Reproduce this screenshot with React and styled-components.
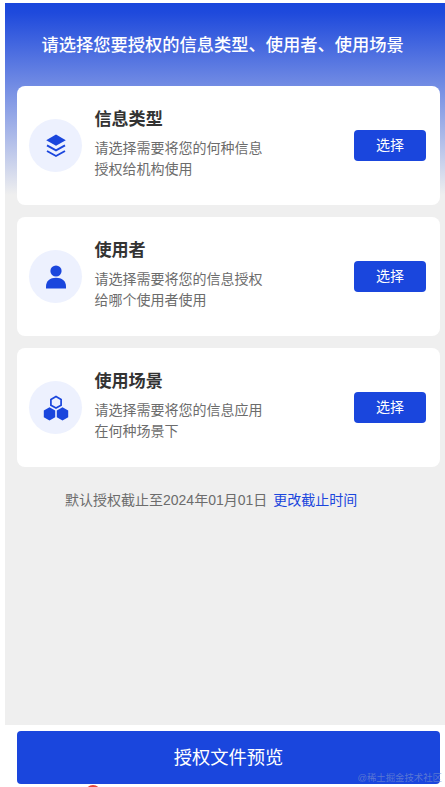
import React from "react";
import styled, { createGlobalStyle } from "styled-components";

const GlobalStyle = createGlobalStyle`
  * {
    box-sizing: border-box;
  }
  body {
    margin: 0;
    background: #ffffff;
    font-family: "Liberation Sans", "Noto Sans CJK SC", sans-serif;
    overflow: hidden;
  }
`;

const Page = styled.div`
  display: flex;
  flex-direction: column;
  width: 445px;
  height: 787px;
  padding: 3px 0 0 5px;
  overflow: hidden;
`;

const Screen = styled.main`
  display: flex;
  flex-direction: column;
  height: 722px;
  padding: 0 5px 0 12px;
  background: linear-gradient(180deg, #1a46dc 0, #1f4adc 10px, #efefef 192px)
    #efefef;
`;

const Header = styled.h1`
  height: 83px;
  margin: 0;
  padding: 0 0 0 24.5px;
  font-size: 17.25px;
  font-weight: 500;
  line-height: 84px;
  white-space: nowrap;
  color: #ffffff;
`;

const CardList = styled.div`
  display: flex;
  flex-direction: column;
  gap: 12px;
`;

const Card = styled.section`
  display: flex;
  align-items: center;
  height: 119px;
  padding: 0 14px 0 12px;
  background: #ffffff;
  border-radius: 8px;
`;

const IconCircle = styled.div`
  display: flex;
  align-items: center;
  justify-content: center;
  width: 53px;
  height: 53px;
  flex-shrink: 0;
  border-radius: 50%;
  background: #edf1fe;
  color: #1a46dd;
`;

const CardBody = styled.div`
  flex: 1;
  margin-left: 12.4px;
  padding-bottom: 4px;
`;

const CardTitle = styled.h2`
  margin: 0 0 6px;
  font-size: 17.1px;
  font-weight: 700;
  line-height: 24px;
  color: #333333;
`;

const CardText = styled.p`
  width: 172px;
  margin: 0;
  font-size: 14px;
  line-height: 20.6px;
  color: #6c6c6c;
`;

const SelectButton = styled.button`
  width: 72px;
  height: 31px;
  padding: 0;
  border: 0;
  border-radius: 4px;
  background: #1a46dd;
  font-family: inherit;
  font-size: 14px;
  line-height: 31px;
  color: #ffffff;
`;

const Deadline = styled.div`
  display: flex;
  gap: 6px;
  margin: 22px 0 0 48px;
  font-size: 14px;
  line-height: 22px;
  white-space: nowrap;
  color: #6c6c6c;
`;

const ChangeLink = styled.span`
  color: #1a46dd;
`;

const Footer = styled.footer`
  position: relative;
  height: 62px;
  padding: 6px 5px 0 12px;
`;

const PreviewButton = styled.button`
  width: 100%;
  height: 53px;
  padding: 0;
  border: 0;
  border-radius: 4px;
  background: #1a46dd;
  font-family: inherit;
  font-size: 18.3px;
  line-height: 53px;
  color: #ffffff;
`;

const Watermark = styled.span`
  position: absolute;
  right: 3px;
  bottom: 2px;
  font-size: 9.4px;
  line-height: 14px;
  white-space: nowrap;
  color: rgba(125, 145, 205, 0.65);
`;

const RedMark = styled.span`
  position: absolute;
  left: 80px;
  top: 60px;
  width: 16px;
  height: 16px;
  border: 2px solid #e2453a;
  border-radius: 50%;
`;

const LayersIcon = () => (
  <svg width="22" height="26" viewBox="0 0 22 26">
    <path d="M11 1.6 L20.8 7.2 L11 12.8 L1.2 7.2 Z" fill="currentColor" />
    <path
      d="M2 12.3 L11 17.3 L20 12.3 M2 18 L11 23 L20 18"
      fill="none"
      stroke="currentColor"
      strokeWidth="1.9"
    />
  </svg>
);

const UserIcon = () => (
  <svg width="22" height="26" viewBox="0 0 22 26">
    <circle cx="11" cy="7" r="5.6" fill="currentColor" />
    <path
      d="M1 24.5 V22.5 C1 17 5.2 13.8 11 13.8 S21 17 21 22.5 V24.5 Z"
      fill="currentColor"
    />
  </svg>
);

const HexagonsIcon = () => (
  <svg width="26" height="26" viewBox="0 0 26 26">
    <path
      d="M13 1.6 L18.1 4.5 V10.2 L13 13.1 L7.9 10.2 V4.5 Z"
      fill="none"
      stroke="currentColor"
      strokeWidth="1.7"
    />
    <path
      d="M6.5 12.3 L12.2 15.6 V22.3 L6.5 25.6 L.8 22.3 V15.6 Z M19.5 12.3 L25.2 15.6 V22.3 L19.5 25.6 L13.8 22.3 V15.6 Z"
      fill="currentColor"
    />
  </svg>
);

const items = [
  {
    title: "信息类型",
    lines: ["请选择需要将您的何种信息", "授权给机构使用"],
    Icon: LayersIcon,
  },
  {
    title: "使用者",
    lines: ["请选择需要将您的信息授权", "给哪个使用者使用"],
    Icon: UserIcon,
  },
  {
    title: "使用场景",
    lines: ["请选择需要将您的信息应用", "在何种场景下"],
    Icon: HexagonsIcon,
  },
];

const App = () => {
  return (
    <>
      <GlobalStyle />
      <Page>
        <Screen>
          <Header>请选择您要授权的信息类型、使用者、使用场景</Header>
          <CardList>
            {items.map(({ title, lines, Icon }) => (
              <Card key={title}>
                <IconCircle>
                  <Icon />
                </IconCircle>
                <CardBody>
                  <CardTitle>{title}</CardTitle>
                  <CardText>
                    {lines[0]}
                    <br />
                    {lines[1]}
                  </CardText>
                </CardBody>
                <SelectButton>选择</SelectButton>
              </Card>
            ))}
          </CardList>
          <Deadline>
            <span>默认授权截止至2024年01月01日</span>
            <ChangeLink>更改截止时间</ChangeLink>
          </Deadline>
        </Screen>
        <Footer>
          <PreviewButton>授权文件预览</PreviewButton>
          <Watermark>@稀土掘金技术社区</Watermark>
          <RedMark />
        </Footer>
      </Page>
    </>
  );
};

export default App;
